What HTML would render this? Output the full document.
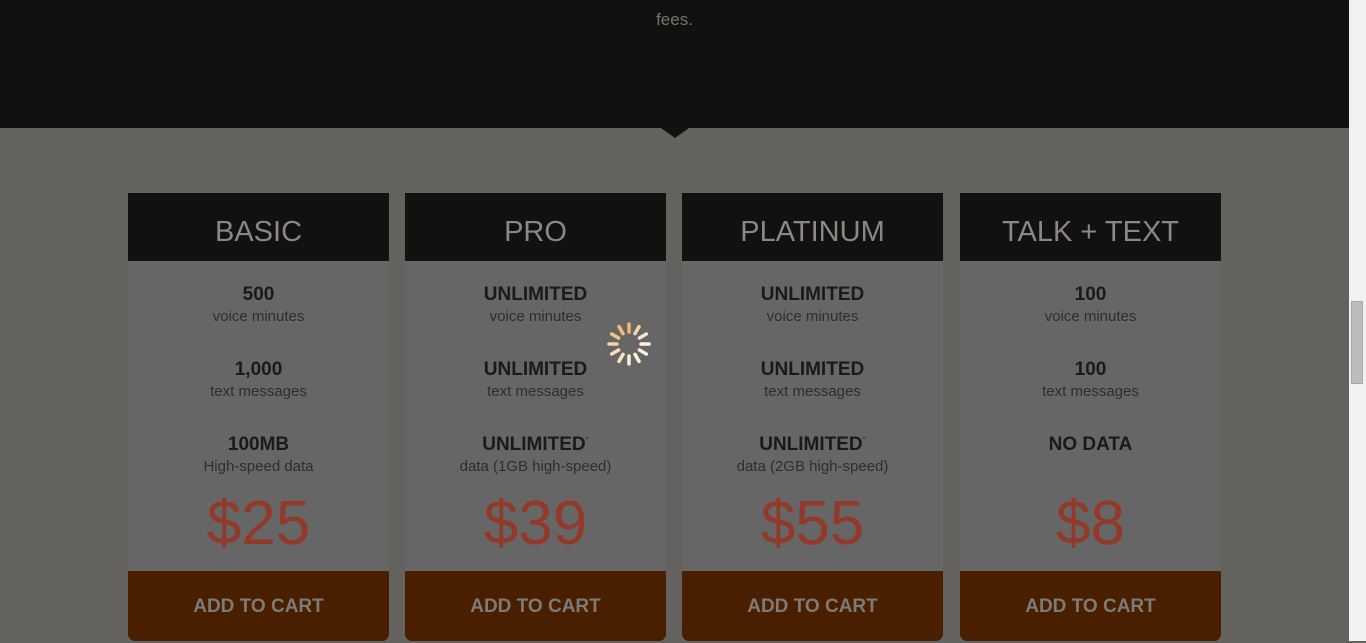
<!DOCTYPE html>
<html><head><style>
body{margin:0;width:1366px;height:641px;overflow:hidden;background:#64625e;font-family:"Liberation Sans",sans-serif;position:relative}
.top{position:absolute;left:0;top:0;width:1349px;height:128px;background:#121110}
.fees{position:absolute;top:10px;left:0;width:1349px;text-align:center;color:#77736e;font-size:17px}
.tri{position:absolute;left:661px;top:128px;width:0;height:0;border-left:14px solid transparent;border-right:14px solid transparent;border-top:10px solid #121110}
.sb{position:absolute;left:1349px;top:0;width:17px;height:641px;background:#f1f1f1}
.th{position:absolute;left:1351px;top:301px;width:12px;height:83px;background:#bcbcbc;border:1px solid #a8a8a8;box-sizing:border-box}
.card{position:absolute;top:193px;width:261px;height:448px;background:#666666;text-align:center}
.hd{height:68px;background:#121110;color:#8a8785;font-size:29px;line-height:78px}
.f{position:absolute;left:0;width:261px}
.f b{display:block;font-size:19px;color:#1a1a1a;line-height:22px}
.f span{display:block;font-size:15px;color:#2e2e2e;line-height:22px}
.f sup{font-size:8px;color:#7a3020;line-height:0;vertical-align:8px}
.pr{position:absolute;top:294px;left:0;width:261px;font-size:62px;color:#92392a;line-height:74px}
.btn{position:absolute;left:0;top:378px;width:261px;height:70px;background:#4a1f00;border-radius:0 0 7px 7px;color:#7d7a77;font-weight:bold;font-size:19px;line-height:72px}
</style></head><body>
<div class="top"><div class="fees">fees.</div></div><div class="tri"></div>
<div class="card" style="left:128px"><div class="hd">BASIC</div>
<div class="f" style="top:91px"><b>500</b><span>voice minutes</span></div>
<div class="f" style="top:166px"><b>1,000</b><span>text messages</span></div>
<div class="f" style="top:241px"><b>100MB</b><span>High-speed data</span></div>
<div class="pr">$25</div><div class="btn">ADD TO CART</div></div>
<div class="card" style="left:405px"><div class="hd">PRO</div>
<div class="f" style="top:91px"><b>UNLIMITED</b><span>voice minutes</span></div>
<div class="f" style="top:166px"><b>UNLIMITED</b><span>text messages</span></div>
<div class="f" style="top:241px"><b>UNLIMITED<sup>*</sup></b><span>data (1GB high-speed)</span></div>
<div class="pr">$39</div><div class="btn">ADD TO CART</div></div>
<div class="card" style="left:682px"><div class="hd">PLATINUM</div>
<div class="f" style="top:91px"><b>UNLIMITED</b><span>voice minutes</span></div>
<div class="f" style="top:166px"><b>UNLIMITED</b><span>text messages</span></div>
<div class="f" style="top:241px"><b>UNLIMITED<sup>*</sup></b><span>data (2GB high-speed)</span></div>
<div class="pr">$55</div><div class="btn">ADD TO CART</div></div>
<div class="card" style="left:960px"><div class="hd">TALK + TEXT</div>
<div class="f" style="top:91px"><b>100</b><span>voice minutes</span></div>
<div class="f" style="top:166px"><b>100</b><span>text messages</span></div>
<div class="f" style="top:241px"><b>NO DATA</b></div>
<div class="pr">$8</div><div class="btn">ADD TO CART</div></div>
<svg style="position:absolute;left:605px;top:320px" width="48" height="48" viewBox="-24 -24 48 48">
<g stroke-width="3.5" stroke-linecap="round">
<line x1="0" y1="-12" x2="0" y2="-20" stroke="#f4b46a" transform="rotate(0)"/>
<line x1="0" y1="-12" x2="0" y2="-20" stroke="#f7d2a8" transform="rotate(30)"/>
<line x1="0" y1="-12" x2="0" y2="-20" stroke="#fbe5cc" transform="rotate(60)"/>
<line x1="0" y1="-12" x2="0" y2="-20" stroke="#fdf0e0" transform="rotate(90)"/>
<line x1="0" y1="-12" x2="0" y2="-20" stroke="#fdf0e0" transform="rotate(120)"/>
<line x1="0" y1="-12" x2="0" y2="-20" stroke="#fdeedd" transform="rotate(150)"/>
<line x1="0" y1="-12" x2="0" y2="-20" stroke="#fcebd6" transform="rotate(180)"/>
<line x1="0" y1="-12" x2="0" y2="-20" stroke="#fbe3c8" transform="rotate(210)"/>
<line x1="0" y1="-12" x2="0" y2="-20" stroke="#fadcbb" transform="rotate(240)"/>
<line x1="0" y1="-12" x2="0" y2="-20" stroke="#f8d0a6" transform="rotate(270)"/>
<line x1="0" y1="-12" x2="0" y2="-20" stroke="#f6c48e" transform="rotate(300)"/>
<line x1="0" y1="-12" x2="0" y2="-20" stroke="#f5bb7c" transform="rotate(330)"/>
</g></svg>
<div class="sb"></div><div class="th"></div>
</body></html>
